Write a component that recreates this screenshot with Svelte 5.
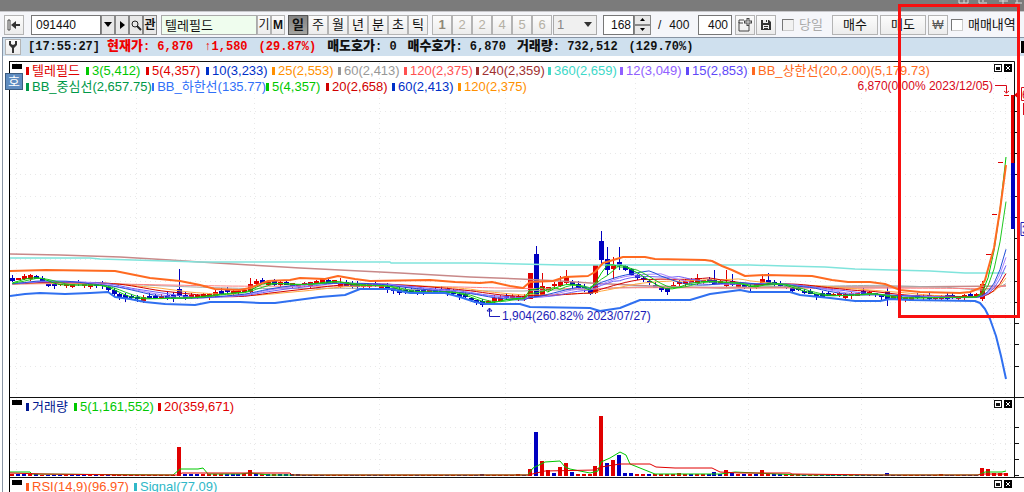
<script>
  let code = $state("091440");
  let name = $state("텔레필드");
  let period = $state("일");
  let count = $state("168");
  let total = $state("400");

  const periods = ["일", "주", "월", "년", "분", "초", "틱"];
  const ticks = ["1", "2", "2", "4", "5", "6"];

  const legend = [
    [
      ["텔레필드", "#e00000"],
      ["3(5,412)", "#00c800"],
      ["5(4,357)", "#e00000"],
      ["10(3,233)", "#0030c8"],
      ["25(2,553)", "#ff9000"],
      ["60(2,413)", "#989898"],
      ["120(2,375)", "#ff5050"],
      ["240(2,359)", "#a03030"],
      ["360(2,659)", "#40d8c8"],
      ["12(3,049)", "#9060ff"],
      ["15(2,853)", "#6048f8"],
      ["BB_상한선(20,2.00)(5,179.73)", "#ff6a20"],
    ],
    [
      ["BB_중심선(2,657.75)", "#009848"],
      ["BB_하한선(135.77)", "#3070f8"],
      ["5(4,357)", "#00c800"],
      ["20(2,658)", "#d00000"],
      ["60(2,413)", "#0030c8"],
      ["120(2,375)", "#ff9000"],
    ],
  ];
  const volumeLegend = [
    [
      ["거래량", "#001890"],
      ["5(1,161,552)", "#00c800"],
      ["20(359,671)", "#e00000"],
    ],
  ];
  const rsiLegend = [
    [
      ["RSI(14,9)(96.97)", "#ff5a20"],
      ["Signal(77.09)", "#30b8c8"],
    ],
  ];

  // a hangul cell is twice as wide as a latin one
  function cells(text) {
    return [...text].reduce((n, c) => n + (c > "\u1100" ? 2 : 1), 0);
  }

  const RED = "#e00000";
  const BLUE = "#0000c0";
  const N = 168;
  const px = (i) => 1006 - (N - 1 - i) * 5.95;

  const track = [
    [9, 281], [30, 277], [38, 278], [50, 285], [95, 285], [108, 289], [120, 296],
    [135, 299], [170, 298], [185, 298], [200, 296], [225, 293], [245, 292], [252, 284],
    [262, 283], [300, 285], [320, 282], [335, 281], [345, 285], [385, 286], [400, 292],
    [450, 292], [465, 297], [480, 303], [490, 303], [500, 299], [524, 298], [530, 274],
    [536, 296], [548, 288], [565, 283], [575, 286], [590, 293], [595, 266], [601, 260],
    [607, 269], [613, 265], [625, 269], [635, 275], [645, 281], [655, 288], [668, 290],
    [680, 284], [700, 281], [740, 284], [750, 289], [762, 282], [780, 285], [800, 292],
    [820, 296], [850, 295], [870, 293], [886, 298], [900, 298], [976, 297], [982, 284],
  ];

  function at(x) {
    for (let k = 1; k < track.length; k++) {
      const [x1, y1] = track[k];
      const [x0, y0] = track[k - 1];
      if (x <= x1) return y0 + ((y1 - y0) * (x - x0)) / (x1 - x0);
    }
    return 284;
  }

  const noise = (i) => Math.abs(Math.sin(i * 12.9898) * 43758.5453) % 1;
  const closes = Array.from({ length: N }, (_, i) => at(px(i)));
  closes.splice(N - 5, 5, 283, 254, 214, 162, 95);

  // x, high, top, bottom, low, colour
  const special = [
    [179, 269, 289, 296, 297, BLUE], [250, 278, 284, 292, 293, RED],
    [322, 278, 279, 283, 284, RED], [328, 278, 280, 283, 284, BLUE],
    [340, 278, 284, 287, 288, RED], [388, 283, 286, 288, 293, BLUE],
    [530, 273, 273, 299, 299, RED], [536, 246, 254, 297, 297, BLUE],
    [542, 273, 286, 295, 295, RED], [559, 276, 282, 286, 287, RED],
    [565, 270, 277, 283, 284, RED], [595, 265, 265, 293, 294, RED],
    [601, 231, 241, 260, 264, BLUE], [607, 247, 259, 270, 275, BLUE],
    [613, 257, 265, 269, 279, RED], [619, 247, 262, 266, 270, BLUE],
    [625, 265, 266, 270, 271, BLUE], [631, 268, 269, 275, 276, BLUE],
    [697, 274, 278, 283, 285, RED], [714, 270, 280, 284, 285, BLUE],
    [726, 270, 283, 286, 287, RED], [732, 274, 281, 285, 286, BLUE],
    [762, 274, 279, 283, 286, RED], [768, 273, 280, 284, 285, BLUE],
    [886, 287, 291, 299, 306, BLUE], [982, 281, 284, 299, 301, RED],
  ];

  const candles = closes.slice(0, N - 4).map((c, i) => {
    const x = Math.round(px(i));
    const s = special.find((v) => Math.abs(v[0] - x) < 3);
    if (s) return { x, high: s[1], top: s[2], bottom: s[3], low: s[4], color: s[5] };
    const prev = i ? closes[i - 1] : c;
    const step = Math.abs(prev - c) > 8 ? 1 : c - prev;
    const r = noise(i + 1);
    const top = Math.round(c - 1 - r * 2);
    const bottom = top + 2 + Math.round(noise(i + 40) * 2);
    const color = step + (r - 0.5) * 2 > 0 ? BLUE : RED;
    return { x, top, bottom, high: top - Math.round(r * 3), low: bottom + Math.round(noise(i + 9) * 3), color };
  });

  function average(n) {
    const pts = closes.map((_, i) => {
      let sum = 0;
      for (let k = i - n + 1; k <= i; k++) sum += k < 0 ? 284 : closes[k];
      return `${px(i).toFixed(1)},${(sum / n).toFixed(1)}`;
    });
    return pts.join(" ");
  }

  const averages = [
    [60, "#a8a8a8"], [120, "#ff8080"], [25, "#ffa840"], [20, "#d00000"],
    [15, "#7060f8"], [12, "#a880ff"], [10, "#2050d8"], [3, "#00c800"], [5, "#20c820"],
  ].map(([n, color]) => ({ color, points: average(n) }));

  const line240 =
    "10,254 60,255 120,257 170,260 200,262 250,265 300,268 400,273 470,277 520,279 560,281 590,283 650,286 720,288 800,287 900,287 1006,286";
  const line360 =
    "10,258 90,258 100,259 200,262 390,262 391,263 480,263 563,265 750,265 785,266 825,267 855,269 892,270 930,271 965,273 1005,273";
  const upper =
    "10,271 46,270 115,271 130,274 150,278 180,281 200,285 215,289 240,290 250,288 268,281 290,280 300,278 325,279 338,276 355,279 370,281 430,280 455,282 480,283 492,282 510,286 523,288 530,282 553,281 565,277 588,276 595,272 603,263 610,261 623,257 645,257 655,259 705,260 712,261 722,266 732,270 745,276 765,275 812,276 832,280 848,282 870,282 885,284 900,290 920,292 960,293 970,292 980,288 985,280 990,262 994,248 1000,210 1006,165";
  const lower =
    "10,296 25,294 40,293 65,294 90,293 108,292 115,297 130,299 145,302 165,304 195,305 210,302 240,302 260,303 275,303 290,301 320,297 345,295 360,289 390,289 410,293 445,293 460,297 475,302 485,304 520,304 530,307 590,308 600,311 620,308 640,300 690,300 710,294 740,290 750,292 790,292 800,295 830,298 855,301 880,301 890,299 910,300 975,301 980,303 985,309 990,319 996,336 1001,356 1006,379";

  const gridX = [16, 136, 254, 379, 505, 635, 748, 861, 993, 1005];
  const gridY = [111, 132, 153, 174, 196, 217, 238, 259, 281, 302, 323, 344, 366];
  const volumeGridY = [427, 443, 459];

  const volumeTops = {
    179: [447, RED], 250: [470, RED], 482: [474, BLUE], 518: [474, RED], 530: [469, RED],
    536: [432, BLUE], 542: [461, RED], 547: [470, RED], 553: [473, BLUE], 559: [467, RED],
    565: [463, RED], 571: [472, BLUE], 595: [466, RED], 601: [416, RED], 607: [463, BLUE],
    613: [460, RED], 619: [455, BLUE], 625: [473, BLUE], 631: [473, BLUE], 678: [473, RED],
    714: [472, BLUE], 720: [474, BLUE], 726: [470, RED], 732: [473, BLUE], 762: [470, RED],
    886: [473, BLUE], 940: [474, RED], 982: [468, RED], 988: [469, RED], 994: [473, RED],
    1000: [473, RED], 1006: [473, RED],
  };
  const volumes = closes.map((_, i) => {
    const x = Math.round(px(i));
    const key = Object.keys(volumeTops).find((k) => Math.abs(k - x) < 3);
    if (key) return { x, top: volumeTops[key][0], color: volumeTops[key][1] };
    const busy = x < 40 || (x > 179 && x < 300) || (x > 570 && x < 800);
    return { x, top: busy ? 474 : 475, color: noise(i + 3) > 0.5 ? RED : BLUE };
  });
  const volume5 =
    "10,472 30,472 32,474 173,475 180,469 198,469 203,468 208,474 240,474 250,473 270,475 528,475 533,468 545,462 560,461 565,467 570,469 590,473 598,471 601,462 610,458 620,452 626,455 630,464 645,470 655,474 720,474 735,472 755,473 800,475 978,475 985,472 1002,472 1006,471";
  const volume20 =
    "10,473 43,474 130,475 178,475 182,473 290,473 292,475 528,475 545,471 595,470 601,467 620,464 650,464 656,467 675,468 712,468 720,472 740,473 790,473 792,474 880,475 978,475 982,474 1006,474";
</script>

{#snippet paneHeader(rows)}
  <header class="pane-header">
    <span class="handle"></span>
    <div class="legend">
      {#each rows as row}
        <ul>
          {#each row as [text, color]}
            <li style:color style:width="{cells(text) * 6 + 12}px"><i></i>{text}</li>
          {/each}
        </ul>
      {/each}
    </div>
    <div class="pane-buttons">
      <button aria-label="최대화">
        <svg width="8" height="8" shape-rendering="crispEdges"><path d="M0 0h8v8H0z" fill="#111" /><path d="M1 1h6v6H1z" fill="#fff" /><path d="M2 3h4v3H2z" fill="#111" /></svg>
      </button>
      <button aria-label="닫기">
        <svg width="8" height="8"><path d="M0 0h8v8H0z" fill="#000" /><path d="M2 2l4 4M6 2l-4 4" stroke="#fff" /></svg>
      </button>
    </div>
  </header>
{/snippet}

<div class="app">
  <div class="titlebar">
    <svg width="66" height="5" fill="none" stroke="#ddd">
      <path d="M1 0v3h9V0M6 0v3M21 0v3h8M25 0v2M41 1h9M45 0v4M57 3h7M59 0v3" />
    </svg>
  </div>

  <div class="toolbar">
    <button class="btn square" aria-label="처음으로">
      <svg width="14" height="12"><path d="M1 1h2v10H1z" fill="#fff" stroke="#444" /><path d="M4 6l5-4v3h4v2H9v3z" fill="#333" /></svg>
    </button>

    <div class="group code">
      <input class="box code-input" aria-label="종목코드" bind:value={code} />
      <button class="btn tiny" aria-label="종목 목록"><svg width="8" height="5"><path d="M0 0h8L4 5z" /></svg></button>
      <button class="btn tiny" aria-label="다음"><svg width="5" height="8"><path d="M0 0l5 4-5 4z" /></svg></button>
      <button class="btn tiny" aria-label="검색">
        <svg width="11" height="12" fill="none" stroke="#222"><circle cx="4" cy="5" r="3" /><path d="M6 7l4 4" stroke-width="2" /></svg>
      </button>
      <button class="btn tiny bold">관</button>
    </div>

    <div class="group name">
      <input class="box name-input" aria-label="종목명" bind:value={name} />
      <button class="btn small">기</button>
      <button class="btn small bold">M</button>
    </div>

    <div class="group periods">
      {#each periods as p}
        <button class="btn" class:active={period === p} onclick={() => (period = p)}>{p}</button>
      {/each}
    </div>

    <div class="group ticks">
      {#each ticks as t, i}
        <button class="btn" class:bold={i === 0} disabled>{t}</button>
      {/each}
    </div>

    <div class="select">
      <select class="box" aria-label="틱 단위" disabled><option>1</option></select>
      <svg width="8" height="5"><path d="M0 0h8L4 5z" fill="#333" /></svg>
    </div>

    <div class="group count">
      <input class="box" aria-label="표시 개수" bind:value={count} />
      <div class="spin">
        <button class="btn" aria-label="증가" onclick={() => (count = String(+count + 1))}><svg width="5" height="3"><path d="M0 3h5L2.500 0z" /></svg></button>
        <button class="btn" aria-label="감소" onclick={() => (count = String(+count - 1))}><svg width="5" height="3"><path d="M0 0h5L2.500 3z" /></svg></button>
      </div>
    </div>
    <span class="of"><span>/</span><span>400</span></span>
    <input class="box total" aria-label="전체 개수" bind:value={total} />

    <div class="group icons">
      <button class="btn square" aria-label="추가">
        <svg width="16" height="14" fill="none" stroke="#444"><path d="M7 2H2v3h4M2 4v9h10V8" /><path d="M11 0v8M7 4h8" stroke-width="3" /><path d="M11 1v6M8 4h6" stroke="#ddd" /></svg>
      </button>
      <button class="btn square" aria-label="저장">
        <svg width="12" height="12"><path d="M1 1h8l2 2v8H1z" fill="#333" /><path d="M3 1h5v3H3zM3 6h6v4H3z" fill="#eee" /><path d="M6 1h1v2H6zM4 7h4v1H4zM4 9h4v1H4z" fill="#333" /></svg>
      </button>
    </div>

    <label class="check today"><input type="checkbox" disabled />당일</label>

    <div class="group trade">
      <button class="btn wide">매수</button>
      <button class="btn wide">매도</button>
      <button class="btn won">₩</button>
    </div>
    <label class="check"><input type="checkbox" />매매내역</label>
  </div>

  <main>
    <div class="quote">
      <button class="btn tool" aria-label="설정">
        <svg width="10" height="12" fill="#333"><path d="M1 0h2v3l2 1 2-1V0h2v4L6 7v5H4V7L1 4z" /></svg>
      </button>
      <span class="time">[17:55:27]</span>
      <span class="up"><b>현재가</b>: 6,870</span>
      <span class="up">↑1,580</span>
      <span class="up">(29.87%)</span>
      <span><b>매도호가</b>: 0</span>
      <span><b>매수호가</b>: 6,870</span>
      <span><b>거래량</b>: 732,512</span>
      <span>(129.70%)</span>
    </div>

    <div class="charts">
      <button class="badge">호</button>
      <section class="pane">
        <svg class="plot" viewBox="10 61 1014 336">
          <g class="grid">
            {#each gridX as x}<path d="M{x}.5 63V397" />{/each}
            {#each gridY as y}<path d="M10 {y}.5H1013" />{/each}
          </g>
          <path class="axis" d="M10 61.500H1014.500V397" />
          {#each gridY as y}<path class="axis" d="M1015 {y}.5h4" />{/each}

          <g shape-rendering="crispEdges">
            {#each candles as c}
              <rect x={c.x} y={c.high} width="1" height={c.low - c.high} fill={c.color} />
              <rect x={c.x - 2} y={c.top} width="5" height={c.bottom - c.top} fill={c.color} />
            {/each}
            <path d="M986 254.500h5M992 214.500h5M998 162.500h5M1004 95.500h5" stroke={RED} />
          </g>

          <g fill="none" stroke-linejoin="round">
            <polyline points={line240} stroke="#c88888" stroke-width="1.500" />
            <polyline points={line360} stroke="#80e4dc" stroke-width="1.500" />
            {#each averages as a}<polyline points={a.points} stroke={a.color} />{/each}
            <polyline points={lower} stroke="#3070f0" stroke-width="2" />
            <polyline points={upper} stroke="#ff6a20" stroke-width="2" />
          </g>

          <rect x="1011" y="95" width="3" height="68" fill={RED} />
          <rect x="1011" y="163" width="4" height="66" fill={BLUE} />
          <path d="M1014 95l6-5v10z" fill={RED} />

          <g class="mark high">
            <text x="993" y="90" text-anchor="end">6,870(0.00% 2023/12/05)</text>
            <path d="M995 85.500h11.500V93M1004 91l2.500 2 2.500-2" />
            <path d="M1030 87.500h-8.500v13h9M1023.500 103v12" />
            <text x="1022" y="99">6</text>
          </g>
          <g class="mark low">
            <path d="M500 316.500h-10.500V308M487 311l2.500-3 2.500 3z" />
            <text x="502" y="320">1,904(260.82% 2023/07/27)</text>
            <path d="M1030 222.500h-9v13h9" stroke="#888" />
            <text x="1022" y="234">3</text>
          </g>
        </svg>
        {@render paneHeader(legend)}
      </section>

      <section class="pane ruled">
        <svg class="plot" viewBox="10 398 1014 79">
          <g class="grid">
            {#each gridX as x}<path d="M{x}.5 399V476" />{/each}
            {#each volumeGridY as y}<path d="M10 {y}.5H1013" />{/each}
          </g>
          <path class="axis" d="M1014.500 398V477" />
          {#each [...volumeGridY, 475] as y}<path class="axis" d="M1015 {y}.5h4" />{/each}
          <g shape-rendering="crispEdges">
            {#each volumes as v}
              <rect x={v.x - 2} y={v.top} width="4" height={476 - v.top} fill={v.color} />
            {/each}
          </g>
          <polyline points={volume5} fill="none" stroke="#00c800" />
          <polyline points={volume20} fill="none" stroke={RED} />
        </svg>
        {@render paneHeader(volumeLegend)}
      </section>

      <section class="pane ruled last">
        {@render paneHeader(rsiLegend)}
      </section>
    </div>
  </main>

  <div class="highlight"></div>
</div>

<style>
  :global(body) {
    background: #fff;
  }
  .app {
    position: relative;
    display: flex;
    flex-direction: column;
    height: 100vh;
    overflow: hidden;
    font: 13px/16px "Liberation Sans", "Noto Sans CJK KR", sans-serif;
    color: #111;
  }
  .titlebar {
    display: flex;
    justify-content: flex-end;
    height: 11px;
    flex: none;
    background: #7b7b7b;
    border-bottom: 1px solid #c8c8cc;
  }
  .toolbar {
    display: flex;
    align-items: center;
    height: 25px;
    flex: none;
    padding-left: 4px;
    background: #f5f6fa;
    white-space: nowrap;
  }
  .toolbar > * {
    flex: none;
  }
  .group {
    display: flex;
  }
  button,
  input,
  select {
    box-sizing: border-box;
    margin: 0;
    padding: 0;
    font: inherit;
    color: inherit;
    border-radius: 0;
  }
  .btn {
    display: flex;
    align-items: center;
    justify-content: center;
    width: 20px;
    height: 20px;
    border: 1px solid #b4b4b4;
    background: linear-gradient(#fcfcfc, #ececec);
  }
  .btn.tiny {
    width: 14px;
    border-color: #888;
    background: #e8e8e8;
    font-size: 12px;
  }
  .btn.small {
    width: 14px;
    font-size: 12px;
  }
  .btn.wide {
    width: 46px;
  }
  .btn.won {
    color: #555;
    font-size: 12px;
  }
  .bold {
    font-weight: bold;
  }
  .btn.active {
    background: linear-gradient(#848484, #a4a4a0);
    border-color: #555;
    font-weight: bold;
  }
  .btn:disabled {
    color: #b4b0a4;
  }
  .btn.bold:disabled {
    color: #908878;
  }
  .box {
    height: 20px;
    border: 1px solid #777;
    background: #fff;
  }
  .code {
    margin-left: 7px;
  }
  .code-input {
    width: 70px;
    padding-left: 4px;
    font-size: 12px;
  }
  .name {
    margin-left: 4px;
  }
  .name-input {
    width: 96px;
    padding-left: 3px;
    border-color: #aaa;
    background: #effdee;
  }
  .periods {
    margin-left: 3px;
  }
  .ticks {
    margin-left: 4px;
  }
  .select {
    display: grid;
    align-items: center;
    margin-left: 1px;
  }
  .select > * {
    grid-area: 1 / 1;
  }
  .select select {
    width: 44px;
    padding-left: 3px;
    appearance: none;
    color: #888;
    background: #f0f0f0;
    border-color: #aaa;
    opacity: 1;
  }
  .select svg {
    justify-self: end;
    margin-right: 5px;
  }
  .count {
    margin-left: 6px;
  }
  .count input {
    width: 31px;
    padding-right: 2px;
    text-align: right;
    font-size: 12px;
  }
  .spin .btn {
    width: 17px;
    height: 10px;
    border-color: #888;
    background: #e8e8e8;
  }
  .of {
    display: flex;
    gap: 8px;
    width: 40px;
    margin-left: 7px;
    font-size: 12px;
  }
  .total {
    width: 34px;
    padding-right: 3px;
    text-align: right;
    font-size: 12px;
  }
  .icons {
    gap: 1px;
    margin-left: 3px;
  }
  .check {
    display: flex;
    align-items: center;
    gap: 5px;
    margin-left: 3px;
  }
  .check input {
    appearance: none;
    width: 12px;
    height: 12px;
    border: 1px solid #ccc;
    border-top-color: #777;
    border-left-color: #777;
    background: #fff;
  }
  .today {
    margin-left: 6px;
    color: #aaa;
  }
  .today input {
    background: #f2f2f2;
  }
  .trade {
    gap: 2px;
    margin-left: 9px;
  }

  main {
    display: flex;
    flex-direction: column;
    flex: 1;
    min-height: 0;
    margin-left: 2px;
    border-left: 1px solid #8894a4;
    border-top: 1px solid #8894a4;
  }
  .quote {
    display: flex;
    align-items: center;
    gap: 11px;
    height: 18px;
    flex: none;
    padding-left: 2px;
    background: #cfe0ee;
    font: bold 12px/18px "Liberation Mono", "Noto Sans CJK KR", monospace;
    white-space: nowrap;
  }
  .quote::after {
    content: "";
    width: 3px;
    height: 12px;
    margin-left: auto;
    background: #000;
    border-left: 1px solid #fff;
  }
  .quote b {
    font-size: 13px;
  }
  .quote .up {
    color: #f00000;
  }
  .btn.tool {
    width: 16px;
    height: 16px;
    margin-right: -4px;
  }
  .time {
    margin-right: -4px;
  }

  .charts {
    position: relative;
    display: flex;
    flex-direction: column;
    flex: 1;
    min-height: 0;
    margin: 5px 0 0 6px;
    border-left: 1px solid #000;
  }
  .badge {
    position: absolute;
    top: 12px;
    left: -5px;
    z-index: 1;
    width: 18px;
    height: 17px;
    border: 1px solid #3c5c80;
    background: #5f8cc0;
    color: #fff;
    line-height: 15px;
  }
  .pane {
    display: grid;
    flex: none;
  }
  .pane > * {
    grid-area: 1 / 1;
  }
  .ruled {
    border-top: 1px solid #111;
  }
  .last {
    flex: 1;
    min-height: 0;
    overflow: hidden;
  }
  .plot {
    display: block;
    width: 100%;
  }
  .grid path {
    stroke: #e8e8e8;
    stroke-dasharray: 1 4;
  }
  .axis {
    fill: none;
    stroke: #111;
  }
  .mark path {
    fill: none;
    stroke: currentColor;
  }
  .mark text {
    fill: currentColor;
    font-size: 12px;
  }
  .high {
    color: #d80818;
  }
  .low {
    color: #1c1cb8;
  }
  .pane-header {
    display: flex;
    align-items: flex-start;
    padding: 2px 12px 0 2px;
  }
  .ruled .pane-header {
    padding-top: 1px;
  }
  .handle {
    width: 10px;
    height: 5px;
    margin: 1px 4px 0 0;
    background: #000;
  }
  .legend {
    flex: 1;
  }
  .legend ul {
    display: flex;
    margin: 0;
    padding: 0;
    list-style: none;
  }
  .legend li {
    display: flex;
    align-items: center;
    gap: 3px;
    flex: none;
    white-space: nowrap;
  }
  .legend i {
    width: 3px;
    height: 8px;
    background: currentColor;
  }
  .pane-buttons {
    display: flex;
    gap: 2px;
    margin-top: 1px;
  }
  .pane-buttons button {
    display: flex;
    border: 0;
    background: none;
  }
  .highlight {
    position: absolute;
    top: 4px;
    right: 4px;
    box-sizing: border-box;
    width: 122px;
    height: 314px;
    border: 3px solid #f81010;
    pointer-events: none;
  }
</style>
